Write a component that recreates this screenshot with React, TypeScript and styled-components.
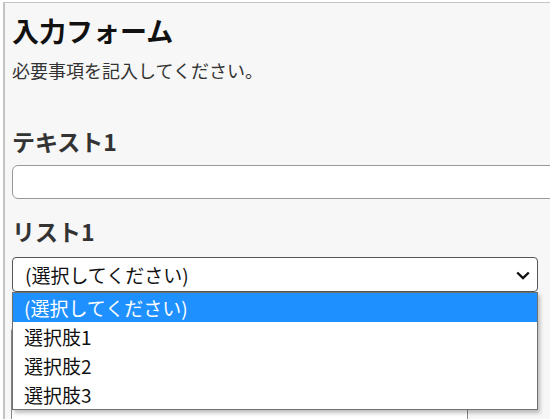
import React from 'react'
import styled, { createGlobalStyle } from 'styled-components'

const GlobalStyle = createGlobalStyle`
  html, body {
    margin: 0;
    background: #ffffff;
    overflow: hidden;
  }
  body {
    font-family: "Noto Sans CJK JP", "Noto Sans", sans-serif;
    font-size: 18px;
    color: #222;
  }
  #root {
    width: 100vw;
    overflow: hidden;
  }
`

// 枠線付きのページ本体
const Frame = styled.div`
  margin: 2px 0 0 3px;
  width: 900px;
  height: 417px;
  box-sizing: border-box;
  border-top: 1px solid #c4c4c4;
  border-left: 2px solid #c4c4c4;
  background: #f7f7f7;
  padding: 10px 0 0 7px;
  overflow: hidden;
`

const Title = styled.h1`
  margin: 0;
  font-size: 27px;
  line-height: 36px;
  font-weight: 700;
  color: #111;
`

const Lead = styled.p`
  margin: 8px 0 0;
  font-size: 18px;
  line-height: 26px;
  color: #333;
`

const Label = styled.h2<{ $gap: number }>`
  margin: ${(p) => p.$gap}px 0 0;
  font-size: 23px;
  line-height: 30px;
  font-weight: 700;
  color: #333;
`

const TextInput = styled.div`
  margin-top: 9px;
  width: 620px;
  height: 34px;
  box-sizing: border-box;
  background: #fff;
  border: 1px solid #999;
  border-radius: 6px;
`

const SelectWrap = styled.div`
  position: relative;
  margin-top: 11px;
  width: 526px;
`

const SelectBox = styled.div`
  height: 35px;
  box-sizing: border-box;
  background: #fff;
  border: 1px solid #555;
  border-radius: 4px;
  display: flex;
  align-items: center;
  justify-content: space-between;
  padding: 0 7px 0 12px;
  font-size: 19px;
  color: #111;
`

const Chevron = styled.svg`
  width: 14px;
  height: 9px;
  margin-top: 1px;
`

// 開いたリスト（ネイティブのポップアップ）
const Options = styled.ul`
  position: absolute;
  top: 35px;
  left: 0;
  width: 526px;
  box-sizing: border-box;
  margin: 0;
  padding: 0;
  list-style: none;
  background: #fff;
  border: 1px solid #707070;
  box-shadow: 2px 3px 4px rgba(0, 0, 0, 0.25);
  z-index: 2;
`

const Option = styled.li<{ $active?: boolean }>`
  height: 29px;
  line-height: 29px;
  padding-left: 11px;
  font-size: 19px;
  color: ${(p) => (p.$active ? '#fff' : '#111')};
  background: ${(p) => (p.$active ? '#1e90ff' : '#fff')};
`

// リストの下に隠れている入力欄
const HiddenArea = styled.div`
  margin: 35px 0 0 -1px;
  width: 457px;
  height: 120px;
  box-sizing: border-box;
  background: #fff;
  border: 1px solid #888;
  border-radius: 4px;
`

const options = ['(選択してください)', '選択肢1', '選択肢2', '選択肢3']

export default function App() {
  return (
    <>
      <GlobalStyle />
      <Frame>
        <Title>入力フォーム</Title>
        <Lead>必要事項を記入してください。</Lead>
        <Label $gap={43}>テキスト1</Label>
        <TextInput />
        <Label $gap={17}>リスト1</Label>
        <SelectWrap>
          <SelectBox>
            <span>(選択してください)</span>
            <Chevron viewBox="0 0 14 9">
              <path d="M1.2 1.5 L7 7 L12.8 1.5" fill="none" stroke="#111" strokeWidth="2.4" />
            </Chevron>
          </SelectBox>
          <Options>
            {options.map((o, i) => (
              <Option key={o} $active={i === 0}>
                {o}
              </Option>
            ))}
          </Options>
        </SelectWrap>
        <HiddenArea />
      </Frame>
    </>
  )
}
